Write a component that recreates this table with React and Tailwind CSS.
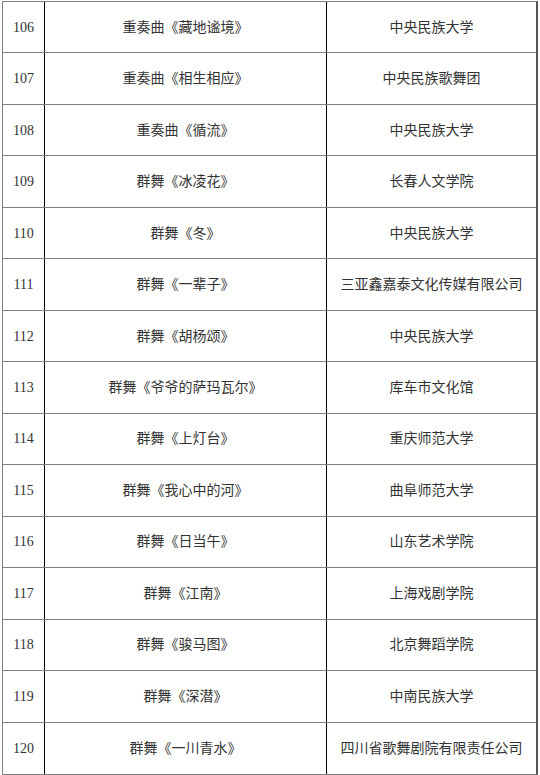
const rows = [
  ["106", "重奏曲《藏地谧境》", "中央民族大学"],
  ["107", "重奏曲《相生相应》", "中央民族歌舞团"],
  ["108", "重奏曲《循流》", "中央民族大学"],
  ["109", "群舞《冰凌花》", "长春人文学院"],
  ["110", "群舞《冬》", "中央民族大学"],
  ["111", "群舞《一辈子》", "三亚鑫嘉泰文化传媒有限公司"],
  ["112", "群舞《胡杨颂》", "中央民族大学"],
  ["113", "群舞《爷爷的萨玛瓦尔》", "库车市文化馆"],
  ["114", "群舞《上灯台》", "重庆师范大学"],
  ["115", "群舞《我心中的河》", "曲阜师范大学"],
  ["116", "群舞《日当午》", "山东艺术学院"],
  ["117", "群舞《江南》", "上海戏剧学院"],
  ["118", "群舞《骏马图》", "北京舞蹈学院"],
  ["119", "群舞《深潜》", "中南民族大学"],
  ["120", "群舞《一川青水》", "四川省歌舞剧院有限责任公司"],
];

export default function App() {
  return (
    <div className="w-[540px] h-[775px] bg-white pt-[1px] pl-[2px]">
      <div className="w-[536px] border border-[#808080] border-r-2 border-r-[#555] text-[14px] text-[#333] font-['Liberation_Serif','Noto_Sans_CJK_SC',serif]">
        {rows.map(([num, title, org], i) => (
          <div
            key={num}
            className={
              "flex h-[51.47px] " +
              (i < rows.length - 1 ? "border-b border-[#808080]" : "")
            }
          >
            <div className="w-[42px] border-r border-black flex items-center justify-center">
              {num}
            </div>
            <div className="w-[282px] border-r border-black flex items-center justify-center">
              {title}
            </div>
            <div className="flex-1 flex items-center justify-center">{org}</div>
          </div>
        ))}
      </div>
    </div>
  );
}
